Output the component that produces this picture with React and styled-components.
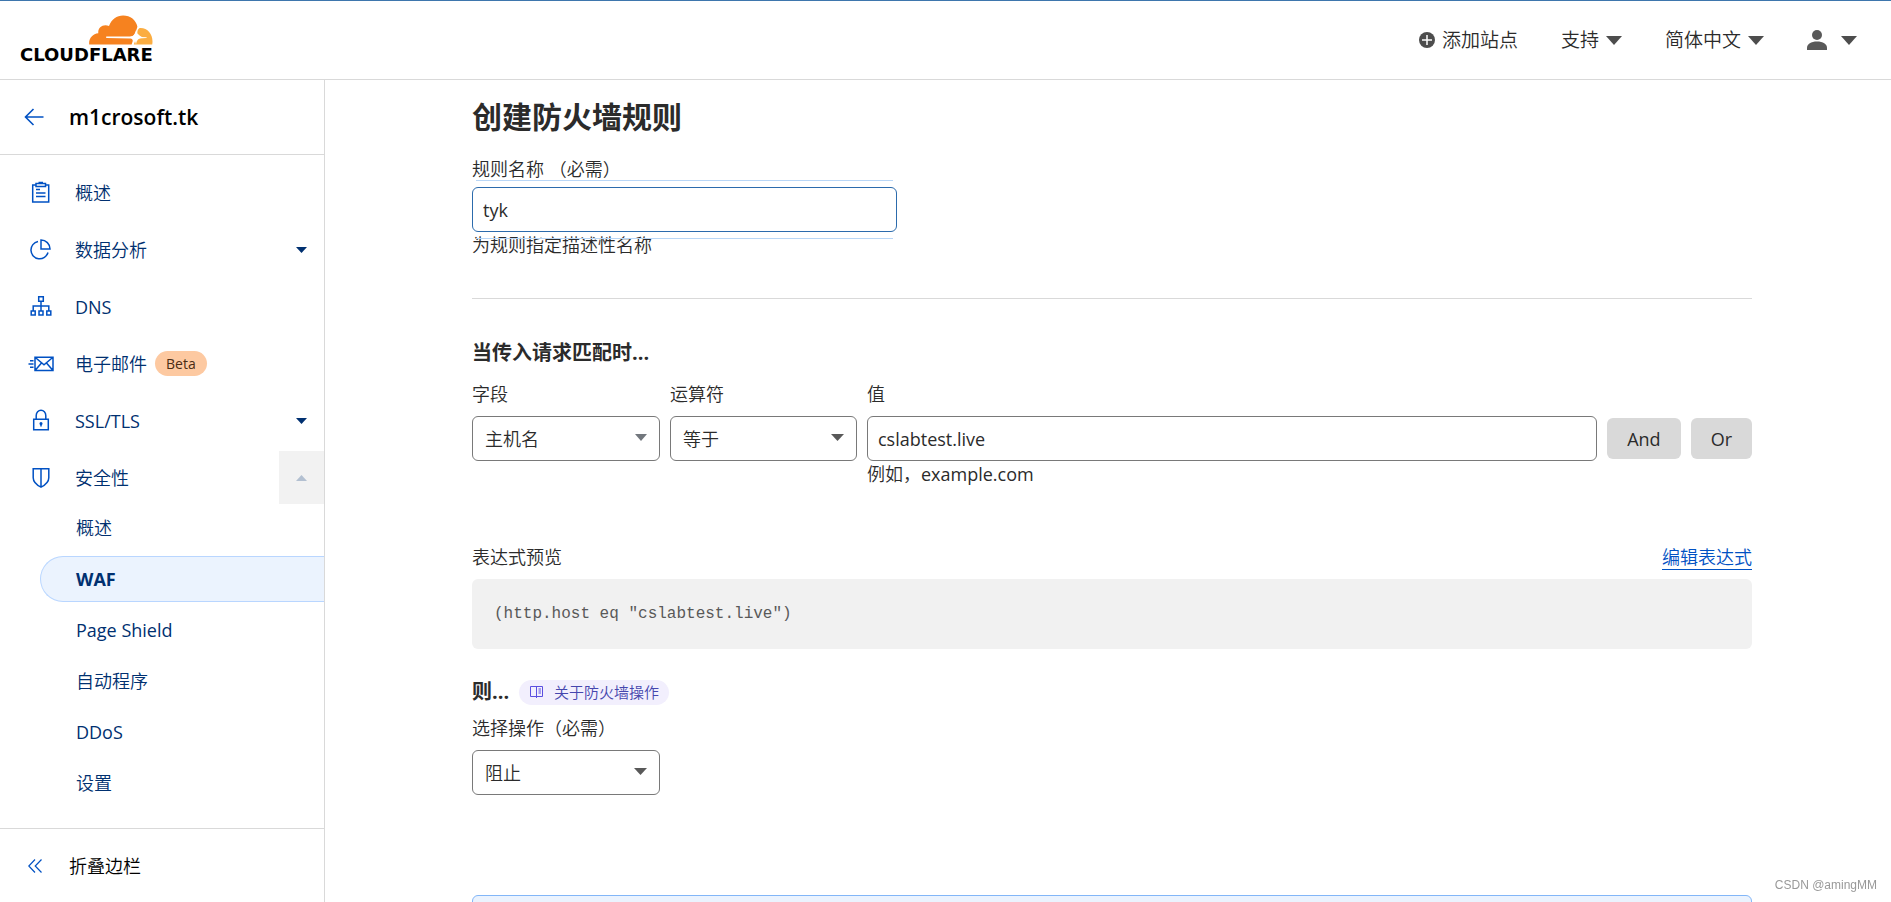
import React, { useState } from 'react'
import styled, { createGlobalStyle, css } from 'styled-components'

const GlobalStyle = createGlobalStyle`
    *, *::before, *::after {
        box-sizing: border-box;
    }
    body {
        margin: 0;
        background: #fff;
        color: #2b2b2b;
        font-family: 'Open Sans', 'Noto Sans CJK SC', sans-serif;
        font-size: 18px;
        line-height: 24px;
    }
    button, input, select {
        font: inherit;
        color: inherit;
    }
    a {
        color: inherit;
        text-decoration: none;
    }
`

function Caret({ size = 16, height = 9, up }) {
    return (
        <svg width={size} height={height} viewBox='0 0 16 9' preserveAspectRatio='none' fill='currentColor' aria-hidden='true'>
            <path d={up ? 'M0 9h16L8 0z' : 'M0 0h16L8 9z'} />
        </svg>
    )
}

function CloudLogo() {
    return (
        <svg width='64' height='30' viewBox='0 0 64 30' aria-hidden='true'>
            <path fill='#fbad41' d='M50.2 13.2c7.6-.9 13.4 5.4 13.3 13.4 0 .9-.1 2.2-.3 2.9H44.800l1.3-3.500c.6-1.600 2-2.300 3.500-2.400l8-.6v-.8l-5.400-.3-3.800-3.400c-.3-2 .4-4.400 1.800-5.300z' />
            <path fill='#f6821f' d='M.2 29.500C-.5 23.600 3.600 18.700 9.300 18.200 8.700 13 13.600 8.600 20 11 22.400 4.500 27.900.5 34.100.5c7.300 0 13 4.600 14.300 11.200-1.100 3.200-1.700 6.600-4.400 9.500l-2.600.4H17.200v1.300l24.300.5c1.700.2 2.500 1.400 2.100 3l-1 3.100z' />
            <path fill='#fff' d='M47 15c.7 4.400 2.600 6.300 7 7.200-4.400.9-6.300 2.800-7 7.200-.8-4.400-2.600-6.300-7-7.200 4.400-.9 6.200-2.800 7-7.200z' />
        </svg>
    )
}

const paths = {
    overview: (
        <>
            <path d='M8 5H4.700v17h16V5H17.500' />
            <path d='M8 3.500h9.500v3H8zM10.500 2.500h4.500M8 9.500h4M8 13h9.500M8 16.500h9.500' />
        </>
    ),
    analytics: (
        <>
            <path d='M10 4.500a8.700 8.700 0 1 0 10 11' />
            <path d='M13 3v9h9a9 9 0 0 0-9-9z' />
        </>
    ),
    dns: (
        <path d='M10.700 2.700h4.600v4.600h-4.600zM13 7.500v9M5.200 16.500V12h15.600v4.500M3.200 17h4v4h-4zM11 17h4v4h-4zM18.800 17h4v4h-4z' />
    ),
    email: (
        <>
            <path d='M7 6.200h18v13.300H7zM7 6.200l9 7.600 9-7.600M7 19.500l6.500-7.500M25 19.500 18.500 12' />
            <path d='M2 9.700h3.500M.5 13h5M2 16.300h3.500' />
        </>
    ),
    ssl: (
        <>
            <path d='M5.700 11.200h14.600v10.500H5.700zM8.200 11V7.500a4.800 5.200 0 0 1 9.600 0V11' />
            <path d='M13 15v3.500' />
            <circle cx='13' cy='15.500' r='.8' />
        </>
    ),
    security: (
        <path d='M5.200 3.700h15.600v9c0 4-3.500 7.200-7.800 9.500-4.300-2.300-7.800-5.500-7.800-9.500zM13 3.700v18.500' />
    ),
}

const menu = [
    { id: 'overview', label: '概述' },
    { id: 'analytics', label: '数据分析', expandable: true },
    { id: 'dns', label: 'DNS', latin: true },
    { id: 'email', label: '电子邮件', beta: true },
    { id: 'ssl', label: 'SSL/TLS', latin: true, expandable: true },
    { id: 'security', label: '安全性', expandable: true, open: true },
]

const subMenu = [
    { label: '概述' },
    { label: 'WAF', active: true },
    { label: 'Page Shield', latin: true },
    { label: '自动程序' },
    { label: 'DDoS', latin: true },
    { label: '设置' },
]

function Header() {
    return (
        <TopBar>
            <Brand href='#home' aria-label='Cloudflare'>
                <CloudLogo />
                <Wordmark>CLOUDFLARE</Wordmark>
            </Brand>
            <TopNav>
                <TopButton type='button'>
                    <svg width='16' height='16' viewBox='0 0 16 16' aria-hidden='true'>
                        <circle cx='8' cy='8' r='8' fill='#4d4d4d' />
                        <path d='M8 3v10M3 8h10' stroke='#fff' strokeWidth='1.500' />
                    </svg>
                    添加站点
                </TopButton>
                <TopButton type='button'>支持<Caret /></TopButton>
                <TopButton type='button'>简体中文<Caret /></TopButton>
                <TopButton type='button' $wide aria-label='account'>
                    <svg width='20' height='20' viewBox='0 0 20 20' fill='#595959' aria-hidden='true'>
                        <circle cx='10' cy='5' r='5' />
                        <path d='M0 20v-2c0-4 4-6.500 10-6.500S20 14 20 18v2z' />
                    </svg>
                    <Caret />
                </TopButton>
            </TopNav>
        </TopBar>
    )
}

function Sidebar() {
    return (
        <Side>
            <SiteRow>
                <BackLink href='#sites' aria-label='back'>
                    <svg width='20' height='18' viewBox='0 0 20 18' fill='none' stroke='currentColor' strokeWidth='1.600' aria-hidden='true'>
                        <path d='M19.500 9H1.500M9.500 1l-8 8 8 8' />
                    </svg>
                </BackLink>
                <SiteName>m1crosoft.tk</SiteName>
            </SiteRow>
            <Menu>
                {menu.map(item => (
                    <MenuRow key={item.id} $open={item.open}>
                        <MenuLink href={`#${item.id}`} $latin={item.latin}>
                            <MenuIcon viewBox='0 0 26 26' aria-hidden='true'>{paths[item.id]}</MenuIcon>
                            {item.label}
                            {item.beta && <Beta>Beta</Beta>}
                        </MenuLink>
                        {item.expandable && (
                            <Toggle type='button' $open={item.open} aria-label={item.label}>
                                <Caret size={11} height={6} up={item.open} />
                            </Toggle>
                        )}
                    </MenuRow>
                ))}
                <SubMenu>
                    {subMenu.map(item => (
                        <SubLink key={item.label} href='#security' $latin={item.latin} $active={item.active}>
                            {item.label}
                        </SubLink>
                    ))}
                </SubMenu>
            </Menu>
            <Collapse type='button'>
                <svg width='14' height='14' viewBox='0 0 14 14' fill='none' stroke='#0051c3' strokeWidth='1.200' aria-hidden='true'>
                    <path d='M7 .5.800 7 7 13.500M13.500.5 7.200 7l6.300 6.500' />
                </svg>
                折叠边栏
            </Collapse>
        </Side>
    )
}

function SelectField({ id, label, options, muted }) {
    return (
        <Field>
            <Label htmlFor={id}>{label}</Label>
            <SelectWrap $muted={muted}>
                <Select id={id}>
                    {options.map(option => <option key={option}>{option}</option>)}
                </Select>
                <Caret size={muted ? 12 : 13} height={7} />
            </SelectWrap>
        </Field>
    )
}

function RuleForm() {
    const [name, setName] = useState('tyk')
    const [host, setHost] = useState('cslabtest.live')

    return (
        <Content>
            <Title>创建防火墙规则</Title>
            <NameField>
                <Label htmlFor='name'>规则名称 （必需）</Label>
                <FocusFrame>
                    <Input id='name' $focused value={name} onChange={e => setName(e.target.value)} />
                </FocusFrame>
                <Help>为规则指定描述性名称</Help>
            </NameField>
            <Divider />

            <SectionTitle>当传入请求匹配时...</SectionTitle>
            <Expression>
                <SelectField id='field' label='字段' options={['主机名', 'URI']} muted />
                <SelectField id='operator' label='运算符' options={['等于', '不等于']} />
                <Field>
                    <Label htmlFor='value'>值</Label>
                    <Input id='value' value={host} onChange={e => setHost(e.target.value)} />
                    <Help>例如，<Sample>example.com</Sample></Help>
                </Field>
                <Joiners>
                    <JoinButton type='button'>And</JoinButton>
                    <JoinButton type='button'>Or</JoinButton>
                </Joiners>
            </Expression>

            <PreviewHead>
                <span>表达式预览</span>
                <EditLink href='#edit'>编辑表达式</EditLink>
            </PreviewHead>
            <Preview>(http.host eq "{host}")</Preview>

            <ActionHead>
                <SectionTitle>则...</SectionTitle>
                <DocLink href='#docs'>
                    <svg width='13' height='12' viewBox='0 0 13 12' fill='none' stroke='currentColor' aria-hidden='true'>
                        <path d='M.5.5h12v10H.5zM6.500.5v11.500M8.500 3h2.500M8.500 5h2.500M8.500 7h2.500' />
                    </svg>
                    关于防火墙操作
                </DocLink>
            </ActionHead>
            <ActionField>
                <SelectField id='action' label='选择操作（必需）' options={['阻止', '允许']} />
            </ActionField>
            <Notice />
        </Content>
    )
}

function App() {
    return (
        <Page>
            <GlobalStyle />
            <Header />
            <Body>
                <Sidebar />
                <Main>
                    <RuleForm />
                </Main>
            </Body>
            <Watermark>CSDN @amingMM</Watermark>
        </Page>
    )
}

const Page = styled.div`
    display: flex;
    flex-direction: column;
    height: 100vh;
`

const TopBar = styled.header`
    display: flex;
    flex: none;
    align-items: center;
    justify-content: space-between;
    height: 80px;
    padding: 0 34px 0 20px;
    border-top: 1px solid #3e76ad;
    border-bottom: 1px solid #d9d9d9;
`

const Brand = styled.a`
    display: flex;
    flex-direction: column;
    align-items: flex-end;
`

const Wordmark = styled.span`
    color: #000;
    font-family: 'DejaVu Sans', sans-serif;
    font-size: 18px;
    font-weight: 700;
    line-height: 20px;
`

const TopNav = styled.nav`
    display: flex;
    align-items: center;
    gap: 43px;
`

const TopButton = styled.button`
    display: flex;
    align-items: center;
    gap: ${props => (props.$wide ? 14 : 7)}px;
    padding: 0;
    border: 0;
    background: none;
    font-size: 19px;
    font-weight: 350;
    cursor: pointer;

    svg {
        color: #4d4d4d;
    }
`

const Body = styled.div`
    display: flex;
    flex: 1;
    min-height: 0;
`

const Side = styled.aside`
    display: flex;
    flex: none;
    flex-direction: column;
    width: 325px;
    border-right: 1px solid #d9d9d9;
`

const SiteRow = styled.div`
    display: flex;
    align-items: center;
    gap: 25px;
    height: 75px;
    padding-left: 24px;
    border-bottom: 1px solid #d9d9d9;
`

const BackLink = styled.a`
    display: flex;
    color: #0051c3;
`

const SiteName = styled.strong`
    color: #000;
    font-size: 21px;
    font-weight: 600;
`

const Menu = styled.nav`
    flex: 1;
    padding-top: 11px;
`

const MenuRow = styled.div`
    display: flex;
    height: 53px;
    margin-bottom: ${props => (props.$open ? 1 : 4)}px;
`

const MenuLink = styled.a`
    display: flex;
    flex: 1;
    align-items: center;
    padding-left: 28px;
    color: #003070;
    font-weight: ${props => (props.$latin ? 400 : 350)};
`

const MenuIcon = styled.svg`
    width: 26px;
    height: 26px;
    margin-right: 21px;
    overflow: visible;
    fill: none;
    stroke: #0051c3;
    stroke-width: 1.5px;
`

const Beta = styled.span`
    margin-left: 8px;
    padding: 0 11px;
    border-radius: 13px;
    background: #fdc9a1;
    color: #4a2c14;
    font-size: 14px;
    font-weight: 400;
    line-height: 25px;
`

const Toggle = styled.button`
    display: flex;
    align-items: center;
    justify-content: center;
    width: 45px;
    padding: 0;
    border: 0;
    background: ${props => (props.$open ? '#f2f2f2' : 'none')};
    color: ${props => (props.$open ? '#b3c0d1' : '#003070')};
    cursor: pointer;
`

const SubMenu = styled.div`
    display: flex;
    flex-direction: column;
    gap: 5px;
    padding-left: 40px;
`

const SubLink = styled.a`
    display: flex;
    align-items: center;
    height: 46px;
    padding-left: 35px;
    border: 1px solid transparent;
    border-right: 0;
    border-radius: 23px 0 0 23px;
    color: #003070;
    font-weight: ${props => (props.$latin ? 400 : 350)};

    ${props => props.$active && css`
        border-color: #b9d6ff;
        background: #ebf3fe;
        font-weight: 700;
    `}
`

const Collapse = styled.button`
    display: flex;
    align-items: center;
    gap: 27px;
    height: 74px;
    padding: 0 0 0 28px;
    border: 0;
    border-top: 1px solid #d9d9d9;
    background: none;
    color: #000;
    font-weight: 350;
    cursor: pointer;
`

const Main = styled.main`
    flex: 1;
    padding: 17px 0 0 8px;
    overflow-y: auto;
    scrollbar-width: none;
`

const Content = styled.form`
    max-width: 1280px;
    margin: 0 auto;
    font-weight: 350;
`

const Title = styled.h1`
    margin: 0 0 20px;
    font-size: 30px;
    font-weight: 700;
    line-height: 40px;
`

const Field = styled.div`
    display: flex;
    flex-direction: column;
    min-width: 0;
`

const Label = styled.label`
    margin-bottom: 10px;
`

const NameField = styled(Field)`
    max-width: 425px;

    ${Label} {
        margin-bottom: 6px;
    }
`

const FocusFrame = styled.div`
    position: relative;
    display: flex;

    &::before, &::after {
        content: '';
        position: absolute;
        left: 4px;
        right: 4px;
        height: 1px;
        background: #b9d6f6;
    }
    &::before {
        top: -7px;
    }
    &::after {
        bottom: -7px;
    }
`

const Input = styled.input`
    width: 100%;
    height: 45px;
    padding: 0 10px;
    border: 1px solid ${props => (props.$focused ? '#2c6bac' : '#797979')};
    border-radius: 6px;
    outline: none;
    background: #fff;
    font-weight: 400;
`

const Help = styled.span`
    margin-top: 1px;
`

const Sample = styled.span`
    font-weight: 400;
`

const Divider = styled.hr`
    height: 1px;
    margin: 41px 0 40px;
    border: 0;
    background: #d9d9d9;
`

const SectionTitle = styled.h2`
    margin: 0;
    font-size: 20px;
    font-weight: 700;
    line-height: 28px;
`

const Expression = styled.div`
    display: grid;
    grid-template-columns: 188px 187px 1fr auto;
    gap: 10px;
    margin-top: 15px;
`

const SelectWrap = styled.div`
    position: relative;

    svg {
        position: absolute;
        top: 18px;
        right: 13px;
        color: ${props => (props.$muted ? '#72777d' : '#595959')};
        pointer-events: none;
    }
`

const Select = styled.select`
    width: 100%;
    height: 45px;
    padding: 0 32px 0 12px;
    border: 1px solid #797979;
    border-radius: 6px;
    appearance: none;
    background: #fff;
    font-weight: 350;
`

const Joiners = styled.div`
    display: flex;
    align-items: flex-start;
    gap: 10px;
    padding-top: 36px;
`

const JoinButton = styled.button`
    height: 41px;
    padding: 0 20px;
    border: 0;
    border-radius: 6px;
    background: #d9d9d9;
    font-weight: 400;
    cursor: pointer;
`

const PreviewHead = styled.div`
    display: flex;
    justify-content: space-between;
    margin: 59px 0 9px;
`

const EditLink = styled.a`
    border-bottom: 1px solid #0051c3;
    color: #0051c3;
`

const Preview = styled.pre`
    margin: 0;
    padding: 0 22px;
    border-radius: 6px;
    background: #f1f1f1;
    color: #595959;
    font-family: 'Liberation Mono', monospace;
    font-size: 16px;
    font-weight: 400;
    line-height: 70px;
`

const ActionHead = styled.div`
    display: flex;
    align-items: center;
    gap: 10px;
    margin: 29px 0 10px;
`

const DocLink = styled.a`
    display: flex;
    align-items: center;
    gap: 11px;
    height: 25px;
    padding: 0 10px 0 11px;
    border-radius: 13px;
    background: #f2effd;
    color: #4546ae;
    font-size: 15px;

    svg {
        color: #5b4fe0;
    }
`

const ActionField = styled.div`
    max-width: 188px;
    white-space: nowrap;
`

const Notice = styled.div`
    height: 80px;
    margin-top: 100px;
    border: 1px solid #82b6f8;
    border-radius: 6px;
    background: #ebf3fe;
`

const Watermark = styled.span`
    position: fixed;
    right: 14px;
    bottom: 8px;
    color: #999;
    font-family: 'Liberation Sans', sans-serif;
    font-size: 12px;
    line-height: 18px;
`

export default App
